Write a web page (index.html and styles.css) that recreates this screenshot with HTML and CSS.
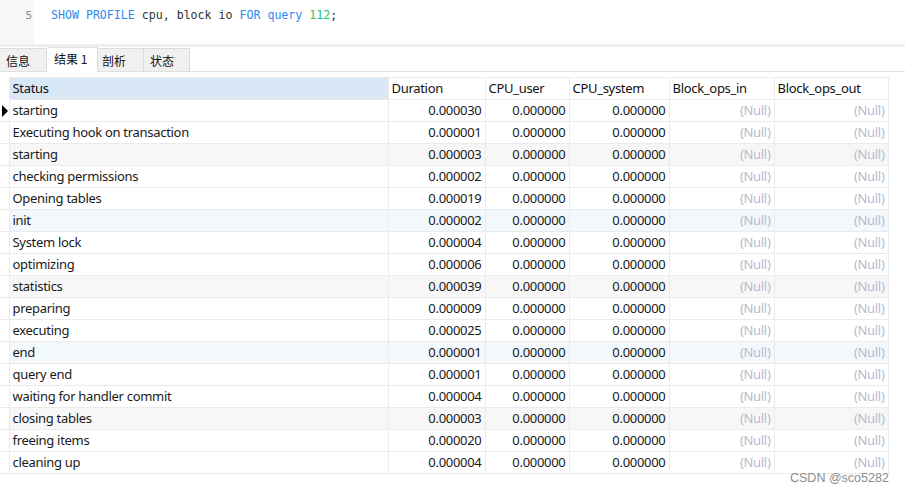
FILE: index.html
```html
<!DOCTYPE html>
<html lang="zh">
<head>
<meta charset="utf-8">
<link rel="stylesheet" href="styles.css">
</head>
<body>
<div class="page">
  <div class="editor">
    <div class="gutter">
      <div class="ln">4</div>
      <div class="ln">5</div>
    </div>
    <div class="code">
      <div class="line">&nbsp;</div>
      <div class="line"><span class="kw">SHOW PROFILE</span> cpu, block io <span class="kw">FOR</span> <span class="kw">query</span> <span class="num">112</span>;</div>
    </div>
  </div>
  <div class="sep"></div>
  <div class="tabs">
    <div class="tab t1">信息</div>
    <div class="tab active">结果 1</div>
    <div class="tab t3">剖析</div>
    <div class="tab t4">状态</div>
  </div>
  <div class="grid-wrap">
    <table class="grid">
      <colgroup>
        <col class="c-g"><col class="c-status"><col class="c-dur"><col class="c-user"><col class="c-sys"><col class="c-in"><col class="c-out">
      </colgroup>
      <thead>
        <tr>
          <th class="g"></th>
          <th class="sel">Status</th>
          <th>Duration</th>
          <th>CPU_user</th>
          <th>CPU_system</th>
          <th>Block_ops_in</th>
          <th>Block_ops_out</th>
        </tr>
      </thead>
      <tbody>
        <tr><td class="g"><span class="cur"></span></td><td>starting</td><td class="n">0.000030</td><td class="n">0.000000</td><td class="n">0.000000</td><td class="null">(Null)</td><td class="null">(Null)</td></tr>
        <tr><td class="g"></td><td>Executing hook on transaction</td><td class="n">0.000001</td><td class="n">0.000000</td><td class="n">0.000000</td><td class="null">(Null)</td><td class="null">(Null)</td></tr>
        <tr class="gray"><td class="g"></td><td>starting</td><td class="n">0.000003</td><td class="n">0.000000</td><td class="n">0.000000</td><td class="null">(Null)</td><td class="null">(Null)</td></tr>
        <tr><td class="g"></td><td>checking permissions</td><td class="n">0.000002</td><td class="n">0.000000</td><td class="n">0.000000</td><td class="null">(Null)</td><td class="null">(Null)</td></tr>
        <tr><td class="g"></td><td>Opening tables</td><td class="n">0.000019</td><td class="n">0.000000</td><td class="n">0.000000</td><td class="null">(Null)</td><td class="null">(Null)</td></tr>
        <tr class="blue"><td class="g"></td><td>init</td><td class="n">0.000002</td><td class="n">0.000000</td><td class="n">0.000000</td><td class="null">(Null)</td><td class="null">(Null)</td></tr>
        <tr><td class="g"></td><td>System lock</td><td class="n">0.000004</td><td class="n">0.000000</td><td class="n">0.000000</td><td class="null">(Null)</td><td class="null">(Null)</td></tr>
        <tr><td class="g"></td><td>optimizing</td><td class="n">0.000006</td><td class="n">0.000000</td><td class="n">0.000000</td><td class="null">(Null)</td><td class="null">(Null)</td></tr>
        <tr class="gray"><td class="g"></td><td>statistics</td><td class="n">0.000039</td><td class="n">0.000000</td><td class="n">0.000000</td><td class="null">(Null)</td><td class="null">(Null)</td></tr>
        <tr><td class="g"></td><td>preparing</td><td class="n">0.000009</td><td class="n">0.000000</td><td class="n">0.000000</td><td class="null">(Null)</td><td class="null">(Null)</td></tr>
        <tr><td class="g"></td><td>executing</td><td class="n">0.000025</td><td class="n">0.000000</td><td class="n">0.000000</td><td class="null">(Null)</td><td class="null">(Null)</td></tr>
        <tr class="blue"><td class="g"></td><td>end</td><td class="n">0.000001</td><td class="n">0.000000</td><td class="n">0.000000</td><td class="null">(Null)</td><td class="null">(Null)</td></tr>
        <tr><td class="g"></td><td>query end</td><td class="n">0.000001</td><td class="n">0.000000</td><td class="n">0.000000</td><td class="null">(Null)</td><td class="null">(Null)</td></tr>
        <tr><td class="g"></td><td>waiting for handler commit</td><td class="n">0.000004</td><td class="n">0.000000</td><td class="n">0.000000</td><td class="null">(Null)</td><td class="null">(Null)</td></tr>
        <tr class="gray"><td class="g"></td><td>closing tables</td><td class="n">0.000003</td><td class="n">0.000000</td><td class="n">0.000000</td><td class="null">(Null)</td><td class="null">(Null)</td></tr>
        <tr><td class="g"></td><td>freeing items</td><td class="n">0.000020</td><td class="n">0.000000</td><td class="n">0.000000</td><td class="null">(Null)</td><td class="null">(Null)</td></tr>
        <tr><td class="g"></td><td>cleaning up</td><td class="n">0.000004</td><td class="n">0.000000</td><td class="n">0.000000</td><td class="null">(Null)</td><td class="null">(Null)</td></tr>
      </tbody>
    </table>
  </div>
  <div class="watermark">CSDN @sco5282</div>
</div>
</body>
</html>
```
FILE: styles.css
```css
html, body {
  margin: 0;
  padding: 0;
  background: #ffffff;
}
.page {
  position: relative;
  width: 905px;
  height: 493px;
  overflow: hidden;
  font-family: "Noto Sans", "Noto Sans CJK SC", sans-serif;
  font-size: 13px;
  color: #1a1a1a;
}
.editor {
  display: flex;
  height: 44px;
  overflow: hidden;
}
.gutter {
  width: 34px;
  background: #f7f7f7;
  margin-top: -13px;
}
.ln {
  height: 19px;
  line-height: 19px;
  text-align: right;
  padding-right: 2px;
  font-family: "DejaVu Sans Mono", monospace;
  font-size: 11px;
  color: #8a8a8a;
}
.code {
  margin-top: -13px;
  padding-left: 17px;
  font-family: "DejaVu Sans Mono", monospace;
  font-size: 11.6px;
  color: #333333;
}
.line {
  height: 19px;
  line-height: 19px;
  white-space: pre;
}
.kw { color: #2a8bf2; }
.num { color: #1fc66a; }
.sep {
  height: 3px;
  background: #efefef;
}
.tabs {
  display: flex;
  align-items: flex-end;
  height: 25px;
  border-bottom: 1px solid #dedede;
  box-sizing: border-box;
  font-family: "Noto Sans CJK SC", sans-serif;
  font-size: 12px;
}
.tab {
  height: 23px;
  line-height: 23px;
  padding: 0 0 0 6px;
  box-sizing: border-box;
  width: 46px;
  background: #f0f0f0;
  border-top: 1px solid #dcdcdc;
  border-right: 1px solid #dcdcdc;
  color: #111;
}
.tab.t1 { width: 47px; }
.tab.t3 { padding-left: 4px; }
.tab.active {
  height: 25px;
  width: 51px;
  background: #ffffff;
  line-height: 22px;
  padding-left: 7px;
  margin-bottom: -1px;
  border-top-color: #e4e4e4;
}
.grid-wrap {
  padding-top: 5px;
}
.grid {
  border-collapse: collapse;
  table-layout: fixed;
  width: 888px;
  font-family: "Noto Sans", "Noto Sans CJK SC", sans-serif;
  font-size: 13px;
  letter-spacing: -0.3px;
}
.c-g { width: 9px; }
.c-status { width: 379px; }
.c-dur { width: 97px; }
.c-user { width: 84px; }
.c-sys { width: 100px; }
.c-in { width: 105px; }
.c-out { width: 114px; }
.grid th, .grid td {
  height: 20px;
  padding: 0 3px 1px 3px;
  border: 1px solid #ebebeb;
  white-space: nowrap;
  overflow: hidden;
  line-height: 19px;
}
.grid th {
  font-weight: normal;
  text-align: left;
  background: #ffffff;
  color: #111;
}
.grid th.sel { background: #d9e8f6; }
.grid th.g, .grid td.g {
  padding: 0;
  border-left: none;
  background: #ffffff;
}
.grid th.g { border-top: none; border-color: #ffffff; border-right-color: #ebebeb; }
.grid td.n { text-align: right; }
.grid td.null { text-align: right; color: #b9b9cf; }
.grid tr.gray td { background: #f7f7f7; }
.grid tr.blue td { background: #f3f8fd; }
.grid tr.gray td.g, .grid tr.blue td.g { background: #ffffff; }
.cur {
  display: block;
  width: 0;
  height: 0;
  margin-left: 2px;
  border-top: 6px solid transparent;
  border-bottom: 6px solid transparent;
  border-left: 6px solid #000;
}
.watermark {
  position: absolute;
  left: 790px;
  top: 471px;
  font-family: "Liberation Sans", sans-serif;
  font-size: 12.5px;
  line-height: 14px;
  color: #8c8c8c;
}
```
